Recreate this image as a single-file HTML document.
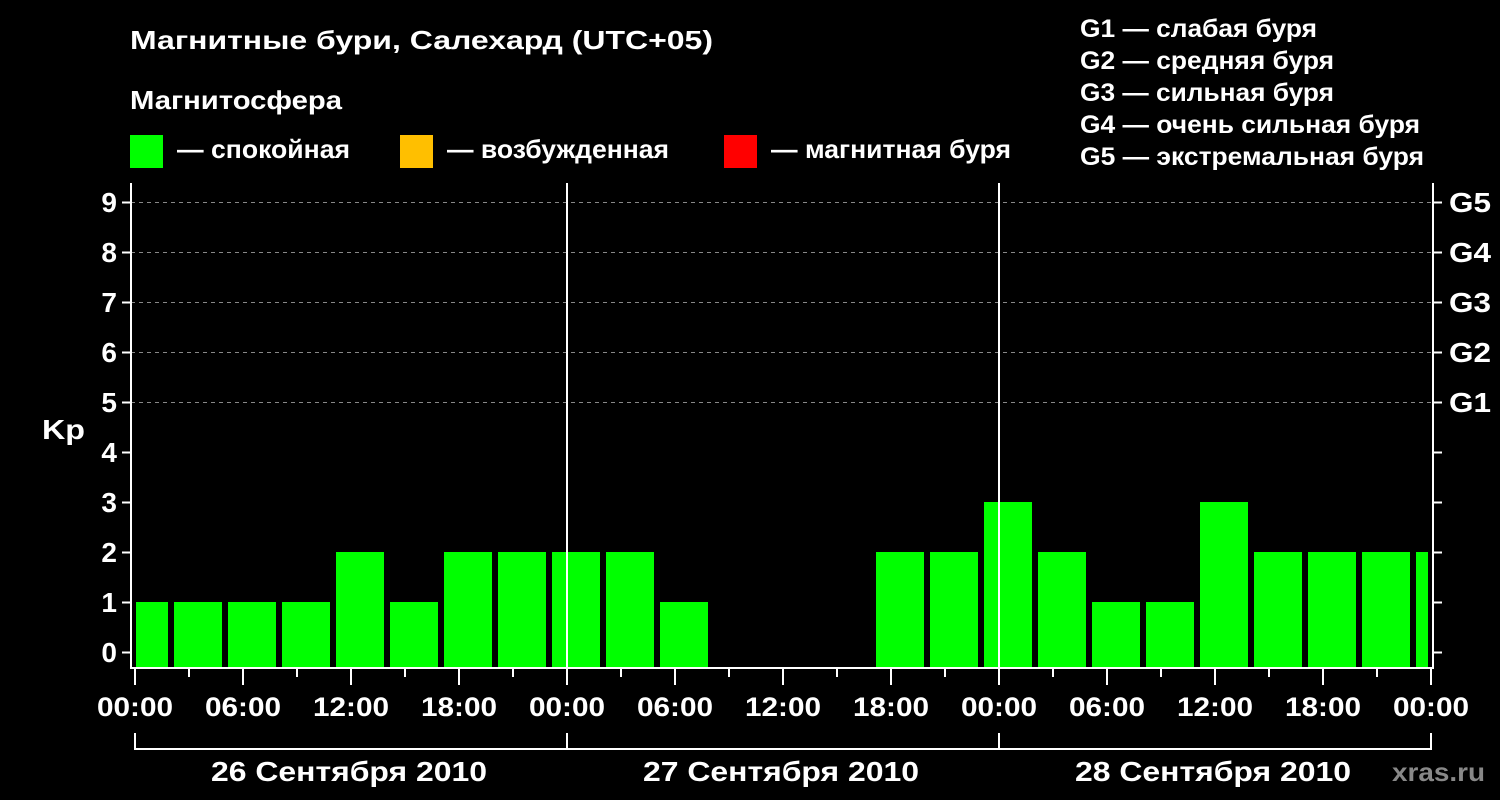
<!DOCTYPE html>
<html><head><meta charset="utf-8"><style>
html,body{margin:0;padding:0;background:#000;width:1500px;height:800px;overflow:hidden}
svg text{font-family:"Liberation Sans",Arial,sans-serif;font-weight:bold;fill:#fff}
</style></head><body>
<svg width="1500" height="800" viewBox="0 0 1500 800">
<rect width="1500" height="800" fill="#000"/>
<text x="130" y="49" font-size="26" textLength="583" lengthAdjust="spacingAndGlyphs">Магнитные бури, Салехард (UTC+05)</text>
<text x="130" y="109" font-size="26" textLength="212" lengthAdjust="spacingAndGlyphs">Магнитосфера</text>
<rect x="130" y="135" width="33" height="33" fill="#00ff00"/>
<text x="177" y="158" font-size="26" textLength="173" lengthAdjust="spacingAndGlyphs">— спокойная</text>
<rect x="400" y="135" width="33" height="33" fill="#ffbf00"/>
<text x="447" y="158" font-size="26" textLength="222" lengthAdjust="spacingAndGlyphs">— возбужденная</text>
<rect x="724" y="135" width="33" height="33" fill="#ff0000"/>
<text x="771" y="158" font-size="26" textLength="240" lengthAdjust="spacingAndGlyphs">— магнитная буря</text>
<text x="1080" y="37" font-size="25" textLength="237" lengthAdjust="spacingAndGlyphs">G1 — слабая буря</text>
<text x="1080" y="69" font-size="25" textLength="254" lengthAdjust="spacingAndGlyphs">G2 — средняя буря</text>
<text x="1080" y="101" font-size="25" textLength="254" lengthAdjust="spacingAndGlyphs">G3 — сильная буря</text>
<text x="1080" y="133" font-size="25" textLength="340" lengthAdjust="spacingAndGlyphs">G4 — очень сильная буря</text>
<text x="1080" y="165" font-size="25" textLength="344" lengthAdjust="spacingAndGlyphs">G5 — экстремальная буря</text>
<g stroke="#888" stroke-dasharray="4,4" stroke-width="1">
<line x1="131" x2="1432" y1="202.5" y2="202.5"/>
<line x1="131" x2="1432" y1="252.5" y2="252.5"/>
<line x1="131" x2="1432" y1="302.5" y2="302.5"/>
<line x1="131" x2="1432" y1="352.5" y2="352.5"/>
<line x1="131" x2="1432" y1="402.5" y2="402.5"/>
</g>
<g fill="#00ff00">
<rect x="136" y="602" width="32" height="66"/>
<rect x="174" y="602" width="48" height="66"/>
<rect x="228" y="602" width="48" height="66"/>
<rect x="282" y="602" width="48" height="66"/>
<rect x="336" y="552" width="48" height="116"/>
<rect x="390" y="602" width="48" height="66"/>
<rect x="444" y="552" width="48" height="116"/>
<rect x="498" y="552" width="48" height="116"/>
<rect x="552" y="552" width="48" height="116"/>
<rect x="606" y="552" width="48" height="116"/>
<rect x="660" y="602" width="48" height="66"/>
<rect x="876" y="552" width="48" height="116"/>
<rect x="930" y="552" width="48" height="116"/>
<rect x="984" y="502" width="48" height="166"/>
<rect x="1038" y="552" width="48" height="116"/>
<rect x="1092" y="602" width="48" height="66"/>
<rect x="1146" y="602" width="48" height="66"/>
<rect x="1200" y="502" width="48" height="166"/>
<rect x="1254" y="552" width="48" height="116"/>
<rect x="1308" y="552" width="48" height="116"/>
<rect x="1362" y="552" width="48" height="116"/>
<rect x="1416" y="552" width="12" height="116"/>
</g>
<g stroke="#fff" stroke-width="2" fill="none">
<path d="M131 183 V668 H1433 V183"/>
<line x1="567" y1="183" x2="567" y2="668"/>
<line x1="999" y1="183" x2="999" y2="668"/>
</g>
<g stroke="#fff" stroke-width="2">
<line x1="122" x2="131" y1="202.5" y2="202.5"/><line x1="122" x2="131" y1="252.5" y2="252.5"/>
<line x1="122" x2="131" y1="302.5" y2="302.5"/><line x1="122" x2="131" y1="352.5" y2="352.5"/>
<line x1="122" x2="131" y1="402.5" y2="402.5"/><line x1="122" x2="131" y1="452.5" y2="452.5"/>
<line x1="122" x2="131" y1="502.5" y2="502.5"/><line x1="122" x2="131" y1="552.5" y2="552.5"/>
<line x1="122" x2="131" y1="602.5" y2="602.5"/><line x1="122" x2="131" y1="652.5" y2="652.5"/>
<line x1="1433" x2="1442" y1="202.5" y2="202.5"/><line x1="1433" x2="1442" y1="252.5" y2="252.5"/>
<line x1="1433" x2="1442" y1="302.5" y2="302.5"/><line x1="1433" x2="1442" y1="352.5" y2="352.5"/>
<line x1="1433" x2="1442" y1="402.5" y2="402.5"/><line x1="1433" x2="1442" y1="452.5" y2="452.5"/>
<line x1="1433" x2="1442" y1="502.5" y2="502.5"/><line x1="1433" x2="1442" y1="552.5" y2="552.5"/>
<line x1="1433" x2="1442" y1="602.5" y2="602.5"/><line x1="1433" x2="1442" y1="652.5" y2="652.5"/>
</g>
<g font-size="28" text-anchor="end">
<text x="117" y="212">9</text><text x="117" y="262">8</text><text x="117" y="312">7</text>
<text x="117" y="362">6</text><text x="117" y="412">5</text><text x="117" y="462">4</text>
<text x="117" y="512">3</text><text x="117" y="562">2</text><text x="117" y="612">1</text>
<text x="117" y="662">0</text>
</g>
<text x="42" y="439" font-size="28" textLength="43" lengthAdjust="spacingAndGlyphs">Kp</text>
<g font-size="28">
<text x="1449" y="212" textLength="42" lengthAdjust="spacingAndGlyphs">G5</text><text x="1449" y="262" textLength="42" lengthAdjust="spacingAndGlyphs">G4</text><text x="1449" y="312" textLength="42" lengthAdjust="spacingAndGlyphs">G3</text>
<text x="1449" y="362" textLength="42" lengthAdjust="spacingAndGlyphs">G2</text><text x="1449" y="412" textLength="42" lengthAdjust="spacingAndGlyphs">G1</text>
</g>
<g stroke="#fff" stroke-width="2">
<line x1="135" x2="135" y1="668" y2="685"/><line x1="189" x2="189" y1="668" y2="677"/>
<line x1="243" x2="243" y1="668" y2="685"/><line x1="297" x2="297" y1="668" y2="677"/>
<line x1="351" x2="351" y1="668" y2="685"/><line x1="405" x2="405" y1="668" y2="677"/>
<line x1="459" x2="459" y1="668" y2="685"/><line x1="513" x2="513" y1="668" y2="677"/>
<line x1="567" x2="567" y1="668" y2="685"/><line x1="621" x2="621" y1="668" y2="677"/>
<line x1="675" x2="675" y1="668" y2="685"/><line x1="729" x2="729" y1="668" y2="677"/>
<line x1="783" x2="783" y1="668" y2="685"/><line x1="837" x2="837" y1="668" y2="677"/>
<line x1="891" x2="891" y1="668" y2="685"/><line x1="945" x2="945" y1="668" y2="677"/>
<line x1="999" x2="999" y1="668" y2="685"/><line x1="1053" x2="1053" y1="668" y2="677"/>
<line x1="1107" x2="1107" y1="668" y2="685"/><line x1="1161" x2="1161" y1="668" y2="677"/>
<line x1="1215" x2="1215" y1="668" y2="685"/><line x1="1269" x2="1269" y1="668" y2="677"/>
<line x1="1323" x2="1323" y1="668" y2="685"/><line x1="1377" x2="1377" y1="668" y2="677"/>
<line x1="1431" x2="1431" y1="668" y2="685"/>
</g>
<g font-size="27">
<text x="97" y="716" textLength="76" lengthAdjust="spacingAndGlyphs">00:00</text>
<text x="205" y="716" textLength="76" lengthAdjust="spacingAndGlyphs">06:00</text>
<text x="313" y="716" textLength="76" lengthAdjust="spacingAndGlyphs">12:00</text>
<text x="421" y="716" textLength="76" lengthAdjust="spacingAndGlyphs">18:00</text>
<text x="529" y="716" textLength="76" lengthAdjust="spacingAndGlyphs">00:00</text>
<text x="637" y="716" textLength="76" lengthAdjust="spacingAndGlyphs">06:00</text>
<text x="745" y="716" textLength="76" lengthAdjust="spacingAndGlyphs">12:00</text>
<text x="853" y="716" textLength="76" lengthAdjust="spacingAndGlyphs">18:00</text>
<text x="961" y="716" textLength="76" lengthAdjust="spacingAndGlyphs">00:00</text>
<text x="1069" y="716" textLength="76" lengthAdjust="spacingAndGlyphs">06:00</text>
<text x="1177" y="716" textLength="76" lengthAdjust="spacingAndGlyphs">12:00</text>
<text x="1285" y="716" textLength="76" lengthAdjust="spacingAndGlyphs">18:00</text>
<text x="1393" y="716" textLength="76" lengthAdjust="spacingAndGlyphs">00:00</text>
</g>
<g stroke="#fff" stroke-width="2" fill="none">
<path d="M135 733 V749 H1431 V733"/>
<line x1="567" x2="567" y1="733" y2="749"/>
<line x1="999" x2="999" y1="733" y2="749"/>
</g>
<g font-size="28">
<text x="211" y="781" textLength="276" lengthAdjust="spacingAndGlyphs">26 Сентября 2010</text>
<text x="643" y="781" textLength="276" lengthAdjust="spacingAndGlyphs">27 Сентября 2010</text>
<text x="1075" y="781" textLength="276" lengthAdjust="spacingAndGlyphs">28 Сентября 2010</text>
</g>
<text x="1392" y="781" font-size="26" textLength="93" lengthAdjust="spacingAndGlyphs" style="fill:#888">xras.ru</text>
</svg>
</body></html>
